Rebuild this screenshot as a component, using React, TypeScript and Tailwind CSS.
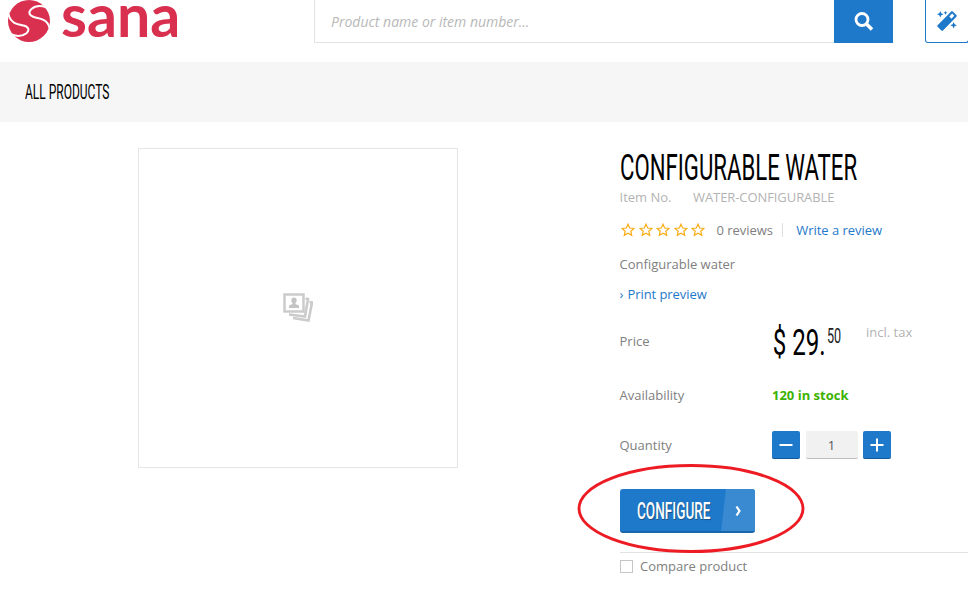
import type { ReactNode } from "react";

const STAR = "M7 1.2 8.7 5 12.9 5.4 9.8 8.2 10.7 12.3 7 10.2 3.3 12.3 4.2 8.2 1.1 5.4 5.3 5Z";

function Row({ label, className, children }: { label: string; className: string; children: ReactNode }) {
  return (
    <div className={`flex items-center ${className}`}>
      <span className="w-[152.500px] shrink-0">{label}</span>
      {children}
    </div>
  );
}

function Logo() {
  return (
    <div className="flex h-[43px] w-[306px] shrink-0 text-[#da3050]">
      <svg className="h-[43px] w-[44px] shrink-0" viewBox="0 0 44 43">
        <circle cx="21" cy="21" r="21" fill="currentColor" />
        <path d="M38.500 7.500C33 5.500 27 6 23.500 9C19.500 12.500 21.500 16 26.500 17.200C33 18.500 40 20 41.500 28" fill="none" stroke="white" strokeWidth="2" />
        <path d="M.5 14C2 23 9 24.200 15.500 25.500C20.500 26.700 22 30 18.500 33.200C15 36 9 36.500 3.500 34.500" fill="none" stroke="white" strokeWidth="2" />
      </svg>
      <span className="ml-[9px] block h-[43px] origin-left scale-x-[0.985] font-['Lato',sans-serif] text-[60px] font-bold leading-[29px]">sana</span>
    </div>
  );
}

export default function App() {
  return (
    <div className="h-[603px] w-[968px] overflow-hidden bg-white font-['Open_Sans',sans-serif] text-[13px] leading-[18px] text-[#808080]">
      <header className="flex h-[62px] items-start pl-2">
        <Logo />
        <div className="flex h-[43px] w-[520px] shrink-0 items-center border-b border-l border-[#e2e2e2] pl-4 pt-px text-[14px] italic text-[#b8b8b8]">
          Product name or item number...
        </div>
        <button className="flex h-[43px] w-[59px] shrink-0 items-center justify-center bg-[#1f79ca]">
          <svg width="20" height="20" viewBox="0 0 20 20" fill="none" stroke="white">
            <circle cx="8" cy="7.500" r="6" strokeWidth="2.800" />
            <path d="m12.500 12 5.500 5.500" strokeWidth="3.600" />
          </svg>
        </button>
        <button className="ml-8 h-[43px] w-[44px] shrink-0 rounded-b-[3px] border border-t-0 border-[#1f79ca] pl-[10px] text-[#1f79ca]">
          <svg className="shrink-0" width="22" height="22" viewBox="0 0 22 22" fill="currentColor">
            <path fillRule="evenodd" d="M15.200 1.500Q16 .7 16.800 1.500L20.400 5.100Q21.200 5.900 20.400 6.700L7 20.500Q6.200 21.200 5.400 20.500L1.600 16.800Q.8 16 1.600 15.200ZM16.200 3.600 13.300 6.600 15.400 8.700 18.300 5.700Z" />
            <path d="m4.300 1 1 2.300 2.300 1-2.300 1-1 2.300-1-2.300-2.300-1 2.300-1ZM9.500.8l.6 1.400 1.400.6-1.400.6-.6 1.400-.6-1.400-1.400-.6 1.400-.6ZM17.600 12l1 2.300 2.300 1-2.300 1-1 2.300-1-2.300-2.300-1 2.300-1Z" />
          </svg>
        </button>
      </header>

      <nav className="flex h-[60px] items-center bg-[#f6f6f6] pl-[25px] text-black">
        <span className="origin-left scale-x-[0.6] whitespace-nowrap font-['Roboto',sans-serif] text-[20px]">ALL PRODUCTS</span>
      </nav>

      <main className="flex items-start">
        <div className="ml-[138px] mt-[26px] flex h-[320px] w-[320px] shrink-0 items-center justify-center border border-[#e5e5e5]">
          <svg width="30" height="30" viewBox="0 0 30 30" fill="none" stroke="#cbcbcb">
            <path d="M1.500 1.500H20.500V18.500H1.500Z" strokeWidth="2.500" />
            <path d="M22.500 5.500 25 6 22 23.500 6 21.500M26.500 9 29 9.500 25.500 27.500 10 25" strokeWidth="2.600" />
            <path d="M11 4.500a2.700 2.700 0 0 1 2.700 2.700c0 1.500-.7 2.300-1.200 2.800v1L16 12.500V15H6v-2.500L9.500 11v-1c-.5-.5-1.200-1.300-1.200-2.800A2.700 2.700 0 0 1 11 4.500Z" fill="#c4c4c4" stroke="none" />
          </svg>
        </div>

        <section className="ml-[161.500px] w-[348.500px] shrink-0 pt-[26px]">
          <h1 className="h-[40px] origin-left scale-x-[0.616] whitespace-nowrap font-['Roboto',sans-serif] text-[36px] leading-[41px] text-black">CONFIGURABLE WATER</h1>
          <div className="flex h-[18px] text-[#b3b3b3]">
            <span className="w-[73.500px]">Item No.</span>
            <span className="tracking-[-0.08px]">WATER-CONFIGURABLE</span>
          </div>
          <div className="mt-[15px] flex h-[18px] items-center">
            <div className="flex w-[97px] gap-[3.500px] pl-[1.500px]">
              {[0, 1, 2, 3, 4].map((i) => (
                <svg key={i} className="shrink-0" width="14" height="14" viewBox="0 0 14 14" fill="none" stroke="#f9ac16" strokeWidth="1.200">
                  <path d={STAR} />
                </svg>
              ))}
            </div>
            <span className="tracking-[-0.05px]">0 reviews</span>
            <span className="ml-[9px] h-[14px] w-px bg-[#dedede]" />
            <a className="ml-[13.500px] tracking-[-0.05px] text-[#1f79ca]">Write a review</a>
          </div>
          <p className="mt-4 h-[18px]">Configurable water</p>
          <a className="mt-3 flex h-[18px] items-center tracking-[-0.07px] text-[#1f79ca]">
            <span className="w-[8px]">›</span>
            Print preview
          </a>
          <Row label="Price" className="mt-[18px] h-[40px]">
            <div className="flex h-[40px] w-[94px] font-['Roboto',sans-serif] text-black">
              <span className="w-[55px] origin-left scale-x-[0.67] whitespace-nowrap pl-px text-[36px] leading-[44px]">$ 29.</span>
              <span className="mt-[5px] origin-left scale-x-[0.63] text-[20px] leading-[20px] text-[#222]">50</span>
            </div>
            <span className="mb-[18px] text-[#b3b3b3]">incl. tax</span>
          </Row>
          <Row label="Availability" className="mt-[25px] h-[18px]">
            <b className="text-[#3cb200]">120 in stock</b>
          </Row>
          <Row label="Quantity" className="mt-[27px] h-[28px]">
            <button className="flex h-[28px] w-[28px] items-center justify-center rounded-[2px] border-b border-[#155a98] bg-[#1f79ca]">
              <svg width="14" height="14" viewBox="0 0 14 14" stroke="white" strokeWidth="2"><path d="M.5 7h13" /></svg>
            </button>
            <span className="ml-[6px] mr-[5px] flex h-[28px] w-[52px] items-center justify-center rounded-[2px] border-b border-[#bdbdbd] bg-[#f1f1f1] pr-px text-[#555]">1</span>
            <button className="flex h-[28px] w-[28px] items-center justify-center rounded-[2px] border-b border-[#155a98] bg-[#1f79ca]">
              <svg width="14" height="14" viewBox="0 0 14 14" stroke="white" strokeWidth="2"><path d="M.5 7h13M7 .5v13" /></svg>
            </button>
          </Row>
          <div className="relative ml-[0.5px] mt-[30px] h-[64px] border-b border-[#e2e2e2]">
            <button className="flex h-[44px] w-[135px] items-center overflow-hidden rounded-[3px] border-b-2 border-[#1a66aa] bg-[#1f79ca] pl-[17px] text-white">
              <span className="w-[84px] origin-left scale-x-[0.59] whitespace-nowrap pt-[4px] text-left font-['Roboto',sans-serif] text-[23px] font-medium [text-shadow:1px_1px_1px_#164f85]">CONFIGURE</span>
              <svg className="h-[44px] w-[34px] shrink-0" viewBox="0 0 34 44">
                <path d="M5 0H34V44H0Z" fill="#398ad1" />
                <path d="m15.500 18.500 3 4.500-3 4.500" fill="none" stroke="white" strokeWidth="2.200" />
              </svg>
            </button>
            <svg className="pointer-events-none absolute -left-[43.500px] -top-[26px]" width="228" height="90" viewBox="0 0 228 90" fill="none" stroke="#ed1c24" strokeWidth="2.900">
              <ellipse cx="114" cy="45.500" rx="112" ry="43" />
            </svg>
          </div>
          <label className="ml-[0.5px] mt-[4px] flex h-[18px] items-center">
            <span className="mr-[7px] h-[13px] w-[13px] border border-[#c6c6c6] bg-white" />
            Compare product
          </label>
        </section>
      </main>
    </div>
  );
}
